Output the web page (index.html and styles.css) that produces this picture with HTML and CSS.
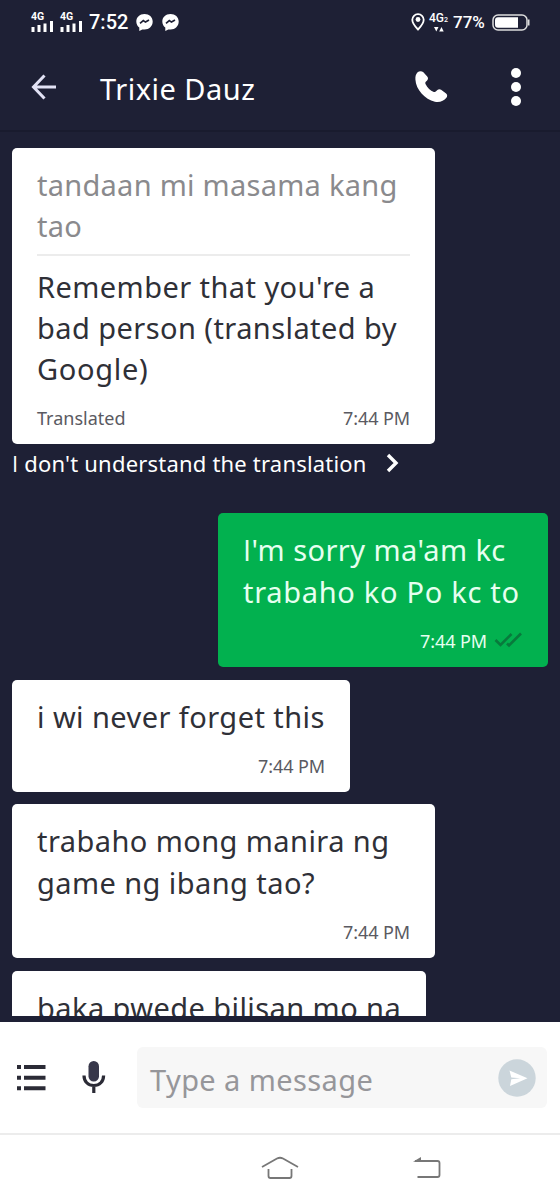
FILE: index.html
```html
<!DOCTYPE html>
<html lang="en">
<head>
    <meta charset="UTF-8">
    <meta name="viewport" content="width=device-width, initial-scale=1.0">
    <title>Trixie Dauz</title>
    <link rel="stylesheet" href="styles.css">
</head>
<body>
    <div class="status-bar">
        <div class="signal">
            <span class="signal-label">4G</span>
            <svg width="23" height="11" viewBox="0 0 23 11" fill="#fff"><path d="M0.500 6h3v5h-3zM6.500 4h3v7h-3zM12.500 2.500h3v8.500h-3zM19 0h3v11h-3z"/></svg>
        </div>
        <div class="signal">
            <span class="signal-label">4G</span>
            <svg width="23" height="11" viewBox="0 0 23 11" fill="#fff"><path d="M0.500 6h3v5h-3zM6.500 4h3v7h-3zM12.500 2.500h3v8.500h-3zM19 0h3v11h-3z"/></svg>
        </div>
        <span class="clock">7:52</span>
        <svg class="messenger" width="17" height="17" viewBox="0 0 17 17"><path d="M8.500 0C3.700 0 .3 3.300.3 7.500c0 2.600 1.200 4.700 3 6V17l3-1.600c.7.2 1.400.2 2.200.2 4.700 0 8.200-3.500 8.200-8S13.200 0 8.500 0z" fill="#fff"/><path d="M4 9.300 7.300 6.500l2.200 1.600 3.500-2" fill="none" stroke="#1e2035" stroke-width="1.700"/></svg>
        <svg class="messenger" width="17" height="17" viewBox="0 0 17 17"><path d="M8.500 0C3.700 0 .3 3.300.3 7.500c0 2.600 1.200 4.700 3 6V17l3-1.600c.7.2 1.400.2 2.200.2 4.700 0 8.200-3.500 8.200-8S13.200 0 8.500 0z" fill="#fff"/><path d="M4 9.300 7.300 6.500l2.200 1.600 3.500-2" fill="none" stroke="#1e2035" stroke-width="1.700"/></svg>
        <div class="status-right">
            <svg width="14" height="18" viewBox="0 0 14 18"><path d="M7 1.200A5.600 5.600 0 0 0 1.300 6.800C1.300 10.700 7 16.500 7 16.500s5.700-5.800 5.700-9.700A5.600 5.600 0 0 0 7 1.200z" fill="none" stroke="#fff" stroke-width="1.800"/><circle cx="7" cy="6.500" r="2.400" fill="#fff"/></svg>
            <div class="data">
                <span class="data-label">4G<small>2</small></span>
                <svg width="10" height="5" viewBox="0 0 10 5" fill="#fff"><path d="M0 0h4.500L2.300 4.500zM5.200 4.500h4.500L7.500 0z"/></svg>
            </div>
            <span class="percent">77%</span>
            <svg width="38" height="17" viewBox="0 0 38 17"><rect x="1" y="1" width="34" height="15" rx="5" fill="none" stroke="#ddd" stroke-width="1.500"/><path d="M6 3.200h20v10.600H6a3 3 0 0 1-3-3V6.200a3 3 0 0 1 3-3z" fill="#fff"/><path d="M36 5.500h1.500v6H36z" fill="#ddd"/></svg>
        </div>
    </div>

    <div class="header">
        <svg class="back" width="26" height="26" viewBox="0 0 26 26" fill="none" stroke="#e2e2f5" stroke-width="3"><path d="M13.500 1.500 2.500 13l11 11.500M2.500 13H25"/></svg>
        <h1>Trixie Dauz</h1>
        <svg class="phone" width="34" height="34" viewBox="0 0 34 34" fill="#fff"><path d="M2.600 2.200C4.200.8 6.800.7 8.400 2.300l3.800 4.200c1.200 1.300 1 2.900-.1 4l-1.300 1.300c-.6.600-.6 1.400-.3 2.100 2 4 4.800 6.500 8.300 8 .8.300 1.500.2 2-.3l1.600-1.500c1-1 2.500-1.100 3.700-.3l5 3.700c1.400 1.100 1.400 2.900.3 4.200-2.400 3.300-6.500 4.800-11.500 4C9.900 29.500.900 19.500.4 9.500.2 6.500.9 3.800 2.600 2.200z"/></svg>
        <svg class="more" width="10" height="38" viewBox="0 0 10 38" fill="#fff"><circle cx="5" cy="5" r="5"/><circle cx="5" cy="19" r="5"/><circle cx="5" cy="33" r="5"/></svg>
    </div>

    <div class="chat">
        <div class="message translated">
            <p class="original">tandaan mi masama kang<br>tao</p>
            <p>Remember that you're a<br>bad person (translated by<br><span class="wide">Google)</span></p>
            <div class="meta"><span class="label">Translated</span><span>7:44 PM</span></div>
        </div>
        <div class="feedback">
            <span><span class="cap">I</span> don't understand the translation</span>
            <svg width="13" height="20" viewBox="0 0 13 20" fill="none" stroke="#fff" stroke-width="3.400"><path d="M2 2l8 8-8 8"/></svg>
        </div>
        <div class="message sent">
            <p><span class="cap">I</span>'m sorry ma'am kc<br><span class="wide">trabaho ko Po kc to</span></p>
            <div class="meta"><span>7:44 PM</span><svg width="29" height="18" viewBox="0 0 29 18" fill="none" stroke="#087a3c" stroke-width="2.600"><path d="M1.500 9l5 5L17.500 3M13 12.500l2 2L27 2.500"/></svg></div>
        </div>
        <div class="message short">
            <p>i wi never forget this</p>
            <div class="meta"><span>7:44 PM</span></div>
        </div>
        <div class="message">
            <p>trabaho mong manira ng<br>game ng ibang tao?</p>
            <div class="meta"><span>7:44 PM</span></div>
        </div>
        <div class="message last">
            <p>baka pwede bilisan mo na</p>
        </div>
    </div>

    <div class="composer">
        <svg class="list" width="29" height="26" viewBox="0 0 29 26" fill="#2b2b36"><path d="M0 0h4v4H0zM7 0h21.500v4H7zM0 10.800h4v4H0zM7 10.800h21.500v4H7zM0 21.300h4v4H0zM7 21.300h21.500v4H7z"/></svg>
        <svg class="mic" width="24" height="33" viewBox="0 0 24 33"><rect x="6.500" y="0" width="10.500" height="20.500" rx="5.200" fill="#37374a"/><path d="M2 14.500c0 6 4 10 9.800 10s9.800-4 9.800-10M11.800 24.500V32" fill="none" stroke="#2b2b36" stroke-width="3.200"/></svg>
        <div class="input">
            <span class="placeholder">Type a message</span>
            <svg width="38" height="38" viewBox="0 0 38 38"><circle cx="19" cy="19" r="18.700" fill="#cbd5db"/><path d="M11.500 11.500 29.500 19.300 12 27l1.300-6.700 9-1-9-.8z" fill="#fff"/></svg>
        </div>
    </div>

    <div class="nav-bar">
        <svg class="home" width="38" height="24" viewBox="0 0 38 24" fill="none" stroke="#777" stroke-width="1.800"><path d="M1 11 16 2.500q3-1.500 6 0L37 11M7.500 13v7q0 2 2 2h19q2 0 2-2v-7"/></svg>
        <svg class="return" width="28" height="24" viewBox="0 0 28 24"><path d="M2 5h22.500q2 0 2 2v12q0 2-2 2H4.500" fill="none" stroke="#777" stroke-width="1.800"/><path d="M0 5.800 8 1v4.800z" fill="#777"/></svg>
    </div>
</body>
</html>
```

FILE: styles.css
```css
body {
    margin: 0;
    width: 560px;
    height: 1200px;
    overflow: hidden;
    background-color: #1e2035;
    font-family: "Noto Sans", sans-serif;
    color: #2f3037;
    display: flex;
    flex-direction: column;
}

svg {
    display: block;
    flex: none;
}

span {
    white-space: nowrap;
}

.status-bar {
    height: 44px;
    padding: 0 30px 0 31px;
    display: flex;
    align-items: center;
    color: #fff;
    font-family: Roboto, sans-serif;
    font-weight: 500;
}

.signal {
    width: 29px;
    height: 19px;
    display: flex;
    flex-direction: column;
    justify-content: space-between;
}

.signal-label {
    font-size: 10.500px;
    font-weight: 700;
    line-height: 8px;
}

.clock {
    font-size: 20px;
    width: 47px;
}

.messenger {
    margin-right: 9px;
}

.status-right {
    margin-left: auto;
    display: flex;
    align-items: center;
}

.data {
    width: 19px;
    margin: 0 5px 0 4px;
    display: flex;
    flex-direction: column;
}

.data svg {
    margin: 1px 0 0 5px;
}

.data-label {
    font-size: 12px;
    line-height: 12px;
}

.data-label small {
    font-size: 7px;
}

.percent {
    font-size: 17px;
    width: 39px;
}

.header {
    height: 88px;
    box-sizing: border-box;
    border-bottom: 2px solid #191b2e;
    display: flex;
    align-items: center;
    padding: 0 39px 0 31px;
}

h1 {
    margin: 3px auto 0 43px;
    font-size: 29px;
    font-weight: 400;
    letter-spacing: 0.5px;
    color: #fff;
    white-space: nowrap;
}

.more {
    margin-left: 62px;
}

.chat {
    height: 884px;
    padding: 16px 12px 0;
    box-sizing: border-box;
    overflow: hidden;
    display: flex;
    flex-direction: column;
    align-items: flex-start;
}

.message {
    width: 423px;
    box-sizing: border-box;
    padding: 16px 25px 13px;
    margin-bottom: 13px;
    border-radius: 5px;
    background: #fff;
    flex: none;
}

.message p {
    margin: 0;
    font-size: 29px;
    line-height: 41.300px;
    letter-spacing: 0.43px;
    white-space: nowrap;
}

.message .original {
    color: #8a8a8d;
    letter-spacing: 0.27px;
    padding-bottom: 7px;
    margin-bottom: 10px;
    border-bottom: 2px solid #ececec;
}

.message .wide {
    letter-spacing: 0.700px;
}

/* capital I without serifs */
.cap {
    font-family: "Open Sans", sans-serif;
}

.meta {
    margin-top: 16px;
    display: flex;
    justify-content: flex-end;
    font-size: 18px;
    line-height: 26px;
    letter-spacing: -0.1px;
    color: #5a5a62;
}

.meta .label {
    margin-right: auto;
    letter-spacing: 0;
}

.translated {
    margin-bottom: 0;
}

.feedback {
    height: 38px;
    margin-bottom: 31px;
    display: flex;
    align-items: center;
    gap: 19px;
    font-size: 22px;
    letter-spacing: 0.2px;
    color: #fff;
}

.sent {
    align-self: flex-end;
    width: 330px;
    background: #02b14f;
}

.sent p,
.sent .meta {
    color: #e6fff0;
}

.sent .meta svg {
    margin: 3px 0 0 7px;
}

.short {
    width: 338px;
    margin-bottom: 12px;
}

.last {
    width: 414px;
    height: 45px;
    overflow: hidden;
    border-radius: 5px 5px 0 0;
    margin-bottom: 0;
}

.composer {
    height: 111px;
    margin-top: 6px;
    box-sizing: border-box;
    background: #fff;
    display: flex;
    align-items: center;
    padding: 0 13px 0 17px;
}

.mic {
    margin: 0 31px 0 36px;
}

.input {
    flex: 1;
    height: 61px;
    border-radius: 6px;
    background: #f7f7f7;
    display: flex;
    align-items: center;
    justify-content: space-between;
    padding: 0 11px 0 13px;
    font-size: 29px;
    color: #96969a;
}

.placeholder {
    margin-top: 3px;
    letter-spacing: 0.4px;
}

.nav-bar {
    flex: 1;
    border-top: 2px solid #ececec;
    background: #fff;
    display: flex;
    padding: 21px 0 0 261px;
}

.return {
    margin-left: 114px;
}
```
